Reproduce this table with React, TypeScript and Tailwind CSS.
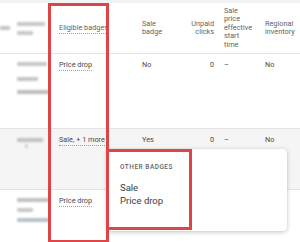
import React from "react";

const Blur = ({ w, ml = 0, c = "#b9b9b9" }: { w: number; ml?: number; c?: string }) => (
  <div
    className="h-[4px] blur-[0.8px] rounded-[1px]"
    style={{ width: w, marginLeft: ml, backgroundColor: c }}
  />
);

const U = ({ children }: { children: React.ReactNode }) => (
  <span className="border-b border-dotted border-[#9aa0a6] pb-[1px]">{children}</span>
);

export default function App() {
  return (
    <div className="relative w-[300px] h-[242px] overflow-hidden bg-white font-['Roboto',sans-serif] text-[7.3px] leading-[8.5px]">
      <div className="h-[3px] bg-[#f1f3f4]" />
      {/* header */}
      <div className="flex h-[51px] items-center border-b border-[#e3e3e3] text-[#5f6368]">
        <div className="w-[17px] flex">
          <Blur w={10} c="#c4c4c4" />
        </div>
        <div className="w-[42px] flex flex-col gap-[5px]">
          <Blur w={28} c="#c9c9c9" />
          <Blur w={16} c="#c9c9c9" />
        </div>
        <div className="w-[83px]">
          <U>Eligible badges</U>
        </div>
        <div className="w-[42px]">
          <div className="max-w-[28px]">Sale badge</div>
        </div>
        <div className="w-[30px] flex justify-end text-right">
          <div className="max-w-[28px]">Unpaid clicks</div>
        </div>
        <div className="w-[51px] pl-[10px]">
          <div className="max-w-[30px]">Sale price effective start time</div>
        </div>
        <div className="flex-1">
          <div className="max-w-[34px]">Regional inventory</div>
        </div>
      </div>
      {/* row 1 */}
      <div className="flex h-[75px] border-b border-[#e3e3e3] pt-[7px] text-[#4a4a4a]">
        <div className="w-[17px]" />
        <div className="w-[42px] flex flex-col">
          <div className="mt-[1px]"><Blur w={30} c="#c8c8c8" /></div>
          <div className="mt-[11px]"><Blur w={21} c="#c4c4c4" /></div>
          <div className="mt-[9px]"><Blur w={33} c="#bdbdbd" /></div>
        </div>
        <div className="w-[83px]">
          <U>Price drop</U>
        </div>
        <div className="w-[42px]">No</div>
        <div className="w-[30px] text-right">0</div>
        <div className="w-[51px] pl-[10px]">–</div>
        <div className="flex-1">No</div>
      </div>
      {/* row 2 */}
      <div className="flex h-[61px] border-b border-[#e3e3e3] pt-[7px] bg-[#f5f5f5] text-[#4a4a4a]">
        <div className="w-[17px]" />
        <div className="w-[42px] flex flex-col">
          <div className="mt-[2px]"><Blur w={26} c="#c2c2c2" /></div>
          <div className="mt-[2px]"><Blur w={3} ml={8} c="#cfcfcf" /></div>
        </div>
        <div className="w-[83px]">
          <U>Sale, + 1 more</U>
        </div>
        <div className="w-[42px]">Yes</div>
        <div className="w-[30px] text-right">0</div>
        <div className="w-[51px] pl-[10px]">–</div>
        <div className="flex-1">No</div>
      </div>
      {/* row 3 */}
      <div className="flex h-[60px] pt-[7px] text-[#4a4a4a]">
        <div className="w-[17px]" />
        <div className="w-[42px] flex flex-col">
          <div className="mt-[1px]"><Blur w={33} c="#c0c0c0" /></div>
          <div className="mt-[6px]"><Blur w={16} c="#c8c8c8" /></div>
          <div className="mt-[6px]"><Blur w={33} c="#b8c0cc" /></div>
        </div>
        <div className="w-[83px]">
          <U>Price drop</U>
        </div>
        <div className="w-[42px]" />
        <div className="w-[30px]" />
        <div className="w-[51px]" />
        <div className="flex-1" />
      </div>

      {/* popup */}
      <div className="absolute left-[107px] top-[149px] w-[180px] h-[82px] rounded-[4px] bg-white shadow-[0_1px_4px_rgba(0,0,0,0.25)] pl-[13px] pt-[14px]">
        <div className="text-[6.5px] leading-[8px] tracking-[0.5px] text-[#5f6368] font-medium">
          OTHER BADGES
        </div>
        <div className="mt-[11px] text-[9.5px] leading-[12.5px] text-[#3c4043]">
          <div>Sale</div>
          <div>Price drop</div>
        </div>
      </div>

      {/* annotation boxes */}
      <div className="absolute left-[48px] top-[3px] w-[61px] h-[240px] border-[3px] border-[#e04545]" />
      <div className="absolute left-[106px] top-[149px] w-[86px] h-[81px] border-[3px] border-[#e04545]" />
    </div>
  );
}
